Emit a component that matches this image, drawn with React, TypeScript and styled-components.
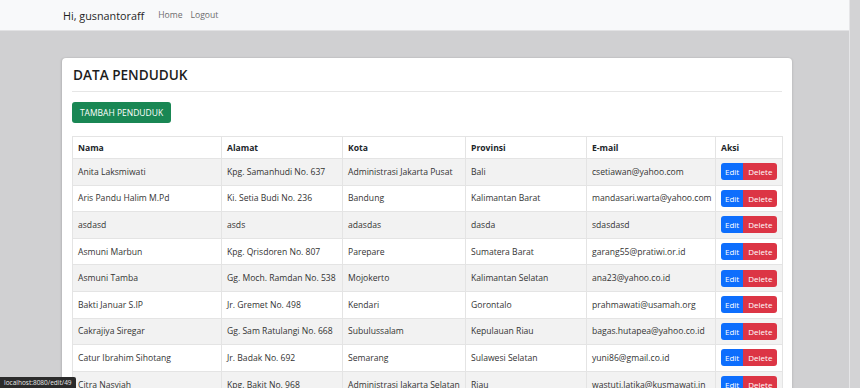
import styled, { createGlobalStyle } from 'styled-components'

const GlobalStyle = createGlobalStyle`
  body {
    margin: 0;
    background: #d0d0d2;
    font-family: "Open Sans", "Noto Sans", sans-serif;
    color: #212529;
    overflow: hidden;
  }
`

const Page = styled.div`
  width: 849px;
  height: 388px;
  overflow: hidden;
`

const Navbar = styled.nav`
  height: 30px;
  background: #f8f9fa;
  border-bottom: 1px solid #e2e2e4;
  display: flex;
  align-items: center;
  padding-left: 63px;
  gap: 14px;
`

const Brand = styled.span`
  font-size: 10.8px;
  color: #1f1f1f;
`

const NavLinks = styled.div`
  display: flex;
  gap: 8px;
  font-size: 8.6px;
  color: #6c6c6c;
`

const Main = styled.main`
  padding: 27px 0 0 62px;
`

const Card = styled.section`
  width: 730px;
  background: #fff;
  border-radius: 4px;
  box-shadow: -1px 0 2px rgba(0, 0, 0, 0.12), 1px 0 2px rgba(0, 0, 0, 0.08);
  padding: 7px 10px 0 10px;
  box-sizing: border-box;
  height: 400px;
`

const Title = styled.h3`
  margin: 0;
  font-size: 13.6px;
  font-weight: 600;
  line-height: 20px;
  padding: 0 1px 6px;
  border-bottom: 1px solid #e6e6e6;
  color: #1d1d1d;
`

const AddButton = styled.button`
  margin-top: 10px;
  height: 21px;
  width: 99px;
  border: none;
  border-radius: 3px;
  background: #198754;
  color: #fff;
  font-family: inherit;
  font-size: 8.5px;
  padding: 0;
`

const Table = styled.table`
  margin-top: 13px;
  width: 710px;
  border-collapse: collapse;
  table-layout: fixed;
  font-size: 8.6px;
  line-height: 12px;
`

const Th = styled.th<{ $w: number }>`
  width: ${p => p.$w}px;
  height: 22px;
  text-align: left;
  font-weight: 700;
  padding: 0 5px;
  border: 1px solid #e4e4e4;
  box-sizing: border-box;
`

const Row = styled.tr<{ $striped: boolean }>`
  background: ${p => (p.$striped ? '#f2f2f2' : '#fff')};
`

const Td = styled.td`
  height: 26.6px;
  padding: 0 5px;
  border: 1px solid #e4e4e4;
  box-sizing: border-box;
  white-space: nowrap;
  overflow: hidden;
  color: #333;
`

const Actions = styled.div`
  display: flex;
`

const ActionButton = styled.button<{ $kind: 'edit' | 'delete' }>`
  height: 17px;
  border: none;
  padding: 0 ${p => (p.$kind === 'edit' ? 4 : 5)}px;
  font-family: inherit;
  font-size: 8px;
  color: #fff;
  background: ${p => (p.$kind === 'edit' ? '#0d6efd' : '#dc3545')};
  border-radius: ${p => (p.$kind === 'edit' ? '3px 0 0 3px' : '0 3px 3px 0')};
`

const Scrollbar = styled.div`
  position: fixed;
  top: 0;
  right: 0;
  width: 11px;
  height: 100%;
  background: #d3d3d5;
  border-left: 1px solid #e6e6e8;
  box-sizing: border-box;
`

const StatusBar = styled.div`
  position: fixed;
  left: 0;
  bottom: 0;
  height: 11px;
  padding: 0 4px;
  background: #2b2b2b;
  color: #e8e8e8;
  font-size: 6.5px;
  line-height: 11px;
  border-top-right-radius: 2px;
`

const columns = [
  { label: 'Nama', w: 149 },
  { label: 'Alamat', w: 121 },
  { label: 'Kota', w: 123 },
  { label: 'Provinsi', w: 121 },
  { label: 'E-mail', w: 129 },
  { label: 'Aksi', w: 67 },
]

const rows = [
  ['Anita Laksmiwati', 'Kpg. Samanhudi No. 637', 'Administrasi Jakarta Pusat', 'Bali', 'csetiawan@yahoo.com'],
  ['Aris Pandu Halim M.Pd', 'Ki. Setia Budi No. 236', 'Bandung', 'Kalimantan Barat', 'mandasari.warta@yahoo.com'],
  ['asdasd', 'asds', 'adasdas', 'dasda', 'sdasdasd'],
  ['Asmuni Marbun', 'Kpg. Qrisdoren No. 807', 'Parepare', 'Sumatera Barat', 'garang55@pratiwi.or.id'],
  ['Asmuni Tamba', 'Gg. Moch. Ramdan No. 538', 'Mojokerto', 'Kalimantan Selatan', 'ana23@yahoo.co.id'],
  ['Bakti Januar S.IP', 'Jr. Gremet No. 498', 'Kendari', 'Gorontalo', 'prahmawati@usamah.org'],
  ['Cakrajiya Siregar', 'Gg. Sam Ratulangi No. 668', 'Subulussalam', 'Kepulauan Riau', 'bagas.hutapea@yahoo.co.id'],
  ['Catur Ibrahim Sihotang', 'Jr. Badak No. 692', 'Semarang', 'Sulawesi Selatan', 'yuni86@gmail.co.id'],
  ['Citra Nasyiah', 'Kpg. Bakit No. 968', 'Administrasi Jakarta Selatan', 'Riau', 'wastuti.latika@kusmawati.in'],
]

const App = () => {
  return (
    <>
      <GlobalStyle />
      <Page>
        <Navbar>
          <Brand>Hi, gusnantoraff</Brand>
          <NavLinks>
            <span>Home</span>
            <span>Logout</span>
          </NavLinks>
        </Navbar>
        <Main>
          <Card>
            <Title>DATA PENDUDUK</Title>
            <AddButton>TAMBAH PENDUDUK</AddButton>
            <Table>
              <thead>
                <tr>
                  {columns.map(c => (
                    <Th key={c.label} $w={c.w}>{c.label}</Th>
                  ))}
                </tr>
              </thead>
              <tbody>
                {rows.map((r, i) => (
                  <Row key={i} $striped={i % 2 === 0}>
                    {r.map((cell, j) => (
                      <Td key={j}>{cell}</Td>
                    ))}
                    <Td>
                      <Actions>
                        <ActionButton $kind="edit">Edit</ActionButton>
                        <ActionButton $kind="delete">Delete</ActionButton>
                      </Actions>
                    </Td>
                  </Row>
                ))}
              </tbody>
            </Table>
          </Card>
        </Main>
      </Page>
      <Scrollbar />
      <StatusBar>localhost:8080/edit/49</StatusBar>
    </>
  )
}

export default App
